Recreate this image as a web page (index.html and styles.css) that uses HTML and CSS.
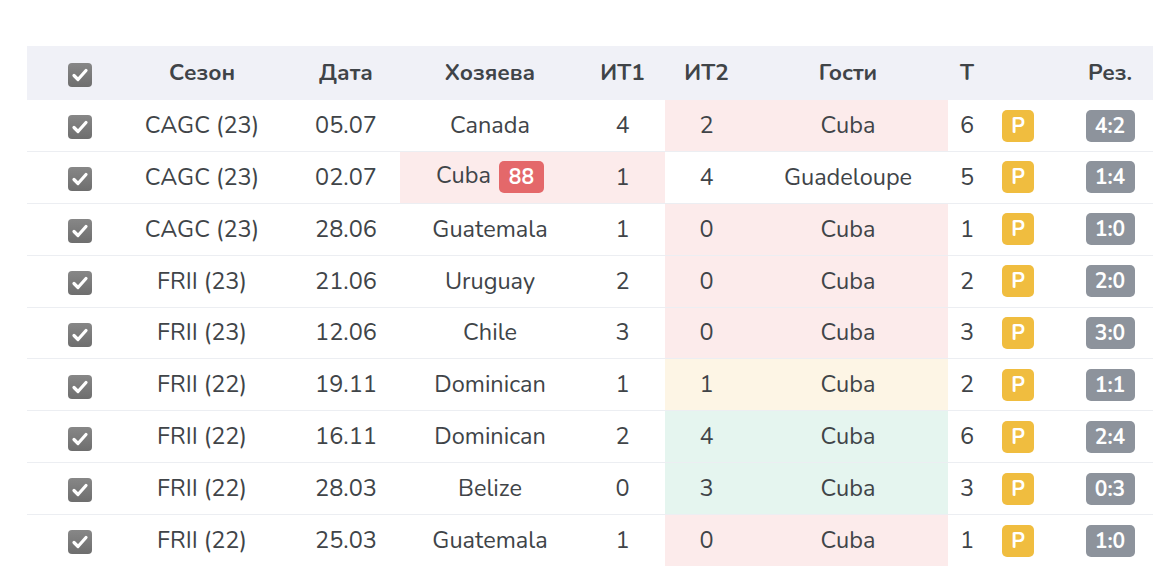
FILE: index.html
```html
<!DOCTYPE html>
<html lang="ru">
<head>
<meta charset="utf-8">
<link rel="stylesheet" href="styles.css">
</head>
<body>
<div class="wrap">
<table class="games">
<colgroup>
<col class="c-chk"><col class="c-season"><col class="c-date"><col class="c-home"><col class="c-s1"><col class="c-s2"><col class="c-away"><col class="c-t"><col class="c-type"><col class="c-res">
</colgroup>
<thead>
<tr>
<th><span class="chk"><svg viewBox="0 0 24 24"><path d="M6 12.5l4 4 8-9"/></svg></span></th>
<th>Сезон</th><th class="date">Дата</th><th>Хозяева</th><th>ИТ1</th><th>ИТ2</th><th>Гости</th><th class="t">Т</th><th></th><th class="res">Рез.</th>
</tr>
</thead>
<tbody>
<tr>
<td><span class="chk"><svg viewBox="0 0 24 24"><path d="M6 12.5l4 4 8-9"/></svg></span></td>
<td>CAGC (23)</td><td class="date">05.07</td><td>Canada</td><td>4</td><td class="lose">2</td><td class="lose">Cuba</td><td class="t">6</td><td><span class="tp">P</span></td><td class="res"><span class="score">4:2</span></td>
</tr>
<tr>
<td><span class="chk"><svg viewBox="0 0 24 24"><path d="M6 12.5l4 4 8-9"/></svg></span></td>
<td>CAGC (23)</td><td class="date">02.07</td><td class="lose">Cuba <span class="num">88</span></td><td class="lose">1</td><td>4</td><td>Guadeloupe</td><td class="t">5</td><td><span class="tp">P</span></td><td class="res"><span class="score">1:4</span></td>
</tr>
<tr>
<td><span class="chk"><svg viewBox="0 0 24 24"><path d="M6 12.5l4 4 8-9"/></svg></span></td>
<td>CAGC (23)</td><td class="date">28.06</td><td>Guatemala</td><td>1</td><td class="lose">0</td><td class="lose">Cuba</td><td class="t">1</td><td><span class="tp">P</span></td><td class="res"><span class="score">1:0</span></td>
</tr>
<tr>
<td><span class="chk"><svg viewBox="0 0 24 24"><path d="M6 12.5l4 4 8-9"/></svg></span></td>
<td>FRII (23)</td><td class="date">21.06</td><td>Uruguay</td><td>2</td><td class="lose">0</td><td class="lose">Cuba</td><td class="t">2</td><td><span class="tp">P</span></td><td class="res"><span class="score">2:0</span></td>
</tr>
<tr>
<td><span class="chk"><svg viewBox="0 0 24 24"><path d="M6 12.5l4 4 8-9"/></svg></span></td>
<td>FRII (23)</td><td class="date">12.06</td><td>Chile</td><td>3</td><td class="lose">0</td><td class="lose">Cuba</td><td class="t">3</td><td><span class="tp">P</span></td><td class="res"><span class="score">3:0</span></td>
</tr>
<tr>
<td><span class="chk"><svg viewBox="0 0 24 24"><path d="M6 12.5l4 4 8-9"/></svg></span></td>
<td>FRII (22)</td><td class="date">19.11</td><td>Dominican</td><td>1</td><td class="draw">1</td><td class="draw">Cuba</td><td class="t">2</td><td><span class="tp">P</span></td><td class="res"><span class="score">1:1</span></td>
</tr>
<tr>
<td><span class="chk"><svg viewBox="0 0 24 24"><path d="M6 12.5l4 4 8-9"/></svg></span></td>
<td>FRII (22)</td><td class="date">16.11</td><td>Dominican</td><td>2</td><td class="win">4</td><td class="win">Cuba</td><td class="t">6</td><td><span class="tp">P</span></td><td class="res"><span class="score">2:4</span></td>
</tr>
<tr>
<td><span class="chk"><svg viewBox="0 0 24 24"><path d="M6 12.5l4 4 8-9"/></svg></span></td>
<td>FRII (22)</td><td class="date">28.03</td><td>Belize</td><td>0</td><td class="win">3</td><td class="win">Cuba</td><td class="t">3</td><td><span class="tp">P</span></td><td class="res"><span class="score">0:3</span></td>
</tr>
<tr>
<td><span class="chk"><svg viewBox="0 0 24 24"><path d="M6 12.5l4 4 8-9"/></svg></span></td>
<td>FRII (22)</td><td class="date">25.03</td><td>Guatemala</td><td>1</td><td class="lose">0</td><td class="lose">Cuba</td><td class="t">1</td><td><span class="tp">P</span></td><td class="res"><span class="score">1:0</span></td>
</tr>
</tbody>
</table>
</div>
</body>
</html>
```
FILE: styles.css
```css
html, body {
  margin: 0;
  padding: 0;
  background: #fff;
}
body {
  font-family: "Nunito", "Lato", "Open Sans", sans-serif;
  color: #404448;
}
.wrap {
  padding: 46px 19px 0 27px;
}
.games {
  width: 1126px;
  border-collapse: collapse;
  table-layout: fixed;
  font-size: 23.5px;
  line-height: 30px;
}
.c-chk { width: 106px; }
.c-season { width: 138px; }
.c-date { width: 129px; }
.c-home { width: 180px; }
.c-s1 { width: 85px; }
.c-s2 { width: 83px; }
.c-away { width: 200px; }
.c-t { width: 40px; }
.c-type { width: 60px; }
.c-res { width: 105px; }

.games th {
  background: #f0f1f7;
  height: 54px;
  padding: 0;
  font-size: 22.5px;
  font-weight: 700;
  text-align: center;
  color: #404448;
}
.games td {
  height: 49.875px;
  padding: 0 0 1px;
  text-align: center;
  border-top: 1px solid #eceef2;
  white-space: nowrap;
}
.games tbody tr:first-child td { border-top: none; }
.games .date { padding-left: 21px; }
.games .t { text-align: left; padding-left: 12px; }
.games .res { padding-left: 19px; }

.lose { background: #fcebeb; }
.draw { background: #fdf5e5; }
.win { background: #e5f5ef; }

.chk {
  display: inline-block;
  width: 24px;
  height: 24px;
  border-radius: 4px;
  background: linear-gradient(#878787, #6e6e6e);
  vertical-align: middle;
}
.chk svg {
  display: block;
  width: 24px;
  height: 24px;
  fill: none;
  stroke: #fff;
  stroke-width: 3.2;
  stroke-linecap: round;
  stroke-linejoin: round;
}
.tp, .score, .num {
  display: inline-block;
  height: 32px;
  line-height: 32px;
  border-radius: 5px;
  color: #fff;
  font-weight: 700;
  font-size: 21px;
  vertical-align: middle;
  text-align: center;
}
.tp {
  width: 32px;
  background: #f0bd3f;
}
.score {
  width: 49px;
  background: #8d939c;
}
.num {
  width: 45px;
  background: #e4686a;
  margin-left: 2px;
}
```
